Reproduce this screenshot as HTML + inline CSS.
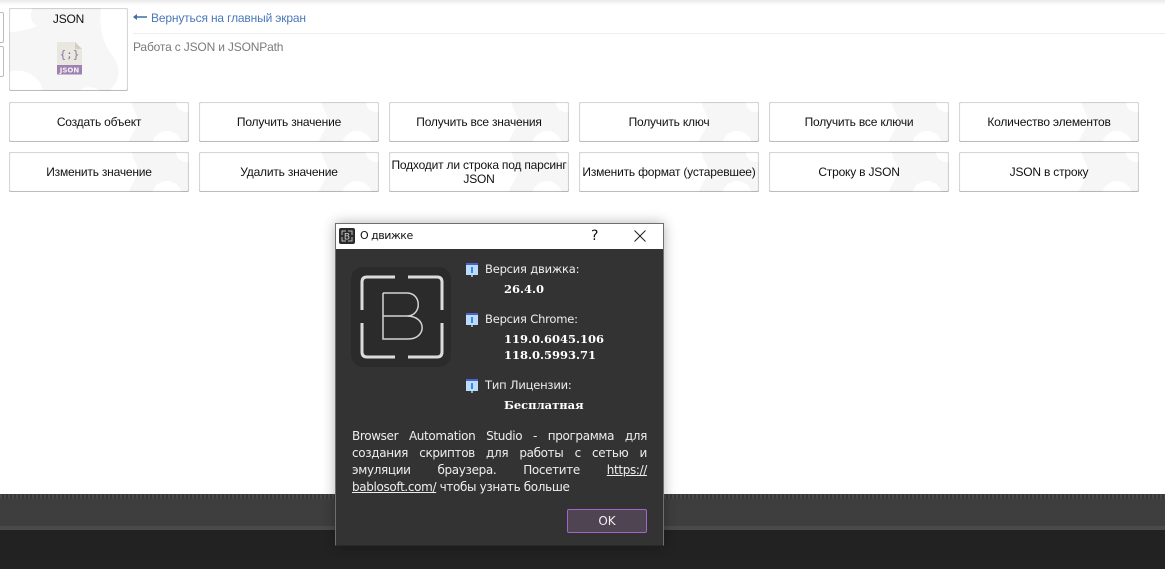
<!DOCTYPE html>
<html><head><meta charset="utf-8"><style>
html,body{margin:0;padding:0;width:1165px;height:569px;overflow:hidden;background:#fff;font-family:"Liberation Sans",sans-serif}
#top{position:absolute;left:0;top:0;width:1165px;height:5px;background:linear-gradient(#e9e9e9,#fff)}
.ab{position:absolute}
.b{position:absolute;width:180px;height:40px;box-sizing:border-box;border-radius:2px;background:#fff;display:flex;align-items:center;justify-content:center;text-align:center;font-size:12px;letter-spacing:-.2px;line-height:14px;color:#111;overflow:hidden;white-space:nowrap}
.b svg{position:absolute;left:0;top:0}
.b span{position:relative}
.b:after,.c:after{content:"";position:absolute;left:0;top:0;right:0;bottom:0;border-radius:2px;box-shadow:inset 0 0 1.500px rgba(0,0,0,.65),inset 0 -1px 0 rgba(0,0,0,.12);pointer-events:none}
#foot{position:absolute;left:0;top:494px;width:1165px;height:75px;background:#222}
#dot{position:absolute;left:0;top:0;width:1165px;height:5px;background:repeating-linear-gradient(90deg,#474747 0 2px,#373737 2px 4px)}
#mid{position:absolute;left:0;top:5px;width:1165px;height:27px;background:#3e3e3e}
#ln{position:absolute;left:0;top:32px;width:1165px;height:4px;background:#4a4a4a}
#dlg{position:absolute;left:335px;top:223px;width:329px;height:323px;box-sizing:border-box;border:1px solid #6e6e6e;border-bottom-color:#2a2a2a;background:#333;box-shadow:0 0 12px rgba(0,0,0,.3);font-family:"DejaVu Sans",sans-serif;color:#f0f0f0}
#tb{position:absolute;left:0;top:0;width:327px;height:25px;background:#fff;color:#111;font-size:11px}
.l{position:absolute;left:149px;font-size:11.500px;letter-spacing:-.2px;line-height:14px;white-space:nowrap;color:#eee}
.v{position:absolute;left:168px;font-family:"DejaVu Serif",serif;font-weight:bold;font-size:11.500px;line-height:16px;color:#fff;white-space:nowrap}
.p{position:absolute;left:16px;width:295px;font-size:12px;letter-spacing:-.35px;line-height:17px;color:#eee;text-align:justify;text-align-last:justify;white-space:nowrap}
.i{position:absolute;left:130px;width:12px;height:12px;background:linear-gradient(#4a63c8 0 2px,#bcdcff 2px)}
.i:after{content:"";position:absolute;left:5px;top:4px;width:2px;height:6px;background:#3a8ae0}
.i:before{content:"";position:absolute;left:5px;top:12px;width:2px;height:2px;background:#9ab}
</style></head><body>
<svg width="0" height="0" style="position:absolute"><defs>
<g id="bg"><path d="M123 0C123 9 131 12 128 22C126 30 121 34 120 40H180V0Z" fill="#f6f6f6"/><circle cx="158" cy="44" r="15" fill="#fff"/><circle cx="177" cy="0" r="10" fill="#fff"/></g>
</defs></svg>
<div id="top"></div>

<div class="ab" style="left:-6px;top:12px;width:8px;height:29px;border:1px solid #bbb;border-radius:2px"></div>
<div class="ab" style="left:-6px;top:46px;width:8px;height:29px;border:1px solid #bbb;border-radius:2px"></div>

<div class="ab c" style="left:9px;top:8px;width:119px;height:83px;background:#fff;border-radius:2px;overflow:hidden">
<svg width="119" height="83" style="position:absolute;left:0;top:0"><path d="M24 0C20 8 22 14 28 18C20 22 8 24 0 24V64C14 60 30 66 34 83H70C75 78 85 78 92 83H100C112 72 112 60 104 48C92 34 90 14 92 0Z" fill="#f6f6f6"/></svg>
<div style="position:absolute;left:0;top:4px;width:119px;text-align:center;font-size:12px;letter-spacing:-.2px;line-height:14px;color:#111">JSON</div>
<svg width="26" height="33" viewBox="0 0 26 33" style="position:absolute;left:48px;top:34px">
<path d="M0 0H18L25 7V24H0Z" fill="#e9e8e0"/><path d="M18 0L25 7H18Z" fill="#d2d0c6"/><rect x="0" y="23" width="25" height="9.500" fill="#a080b0"/>
<text x="12.500" y="30.500" text-anchor="middle" font-family="'DejaVu Sans',sans-serif" font-weight="bold" font-size="7" fill="#f4f0f6">JSON</text>
<text x="12.500" y="16" text-anchor="middle" font-family="'DejaVu Sans Mono',monospace" font-size="11" fill="#8a72a0">{;}</text></svg>
</div>

<div class="ab" style="left:133px;top:11px;font-size:12px;letter-spacing:-.16px;line-height:14px;color:#4a78b8;white-space:nowrap"><svg width="14" height="8" style="vertical-align:1px;margin-right:4px"><path d="M0 4L4 1V3.300H14V4.700H4V7Z" fill="#3d6ea8"/></svg>Вернуться на главный экран</div>
<div class="ab" style="left:133px;top:33px;width:1032px;height:1px;background:#eee"></div>
<div class="ab" style="left:133px;top:40px;font-size:12px;letter-spacing:-.17px;line-height:14px;color:#7a7a7a;white-space:nowrap">Работа с JSON и JSONPath</div>

<div class="b" style="left:9px;top:102px"><svg width="180" height="40"><use href="#bg"/></svg><span>Создать объект</span></div>
<div class="b" style="left:199px;top:102px"><svg width="180" height="40"><use href="#bg"/></svg><span>Получить значение</span></div>
<div class="b" style="left:389px;top:102px"><svg width="180" height="40"><use href="#bg"/></svg><span>Получить все значения</span></div>
<div class="b" style="left:579px;top:102px"><svg width="180" height="40"><use href="#bg"/></svg><span>Получить ключ</span></div>
<div class="b" style="left:769px;top:102px"><svg width="180" height="40"><use href="#bg"/></svg><span>Получить все ключи</span></div>
<div class="b" style="left:959px;top:102px"><svg width="180" height="40"><use href="#bg"/></svg><span>Количество элементов</span></div>
<div class="b" style="left:9px;top:152px"><svg width="180" height="40"><use href="#bg"/></svg><span>Изменить значение</span></div>
<div class="b" style="left:199px;top:152px"><svg width="180" height="40"><use href="#bg"/></svg><span>Удалить значение</span></div>
<div class="b" style="left:389px;top:152px"><svg width="180" height="40"><use href="#bg"/></svg><span>Подходит ли строка под парсинг<br>JSON</span></div>
<div class="b" style="left:579px;top:152px"><svg width="180" height="40"><use href="#bg"/></svg><span>Изменить формат (устаревшее)</span></div>
<div class="b" style="left:769px;top:152px"><svg width="180" height="40"><use href="#bg"/></svg><span>Строку в JSON</span></div>
<div class="b" style="left:959px;top:152px"><svg width="180" height="40"><use href="#bg"/></svg><span>JSON в строку</span></div>

<div id="foot"><div id="dot"></div><div id="mid"></div><div id="ln"></div></div>

<div id="dlg">
<div id="tb">
<svg width="16" height="16" viewBox="0 0 16 16" style="position:absolute;left:3px;top:4px"><rect width="16" height="16" rx="2" fill="#2a2a2a"/><path d="M3 7V3H7M9 3H13V7M13 9V13H9M7 13H3V9" fill="none" stroke="#bbb" stroke-width="1"/><text x="8" y="11.500" text-anchor="middle" font-family="'DejaVu Sans',sans-serif" font-size="9" fill="#ccc">B</text></svg>
<span style="position:absolute;left:24px;top:5px;line-height:14px;letter-spacing:-.5px">О движке</span>
<span style="position:absolute;left:255px;top:5px;font-size:14px;line-height:15px">?</span>
<svg width="12" height="12" style="position:absolute;left:298px;top:6px"><path d="M.5 .5L11.500 11.500M11.500 .5L.5 11.500" stroke="#222" stroke-width="1" fill="none"/></svg>
</div>

<svg width="100" height="100" viewBox="0 0 100 100" style="position:absolute;left:15px;top:43px">
<rect width="100" height="100" rx="12" fill="#2b2b2b"/>
<path d="M44 10H16Q11 10 11 15V43M57 10H86Q91 10 91 15V43M11 56V85Q11 90 16 90H44M91 56V85Q91 90 86 90H57" fill="none" stroke="#dcdcdc" stroke-width="3"/>
<path d="M32 26H56C71 26 71 49 56 49H32M32 26V72H57C76 72 76 49 56 49" fill="none" stroke="#d4d4d4" stroke-width="1.500"/>
</svg>

<div class="i" style="top:39px"></div><div class="l" style="top:38px">Версия движка:</div>
<div class="v" style="top:57px">26.4.0</div>
<div class="i" style="top:89px"></div><div class="l" style="top:88px">Версия Chrome:</div>
<div class="v" style="top:107px">119.0.6045.106</div>
<div class="v" style="top:123px">118.0.5993.71</div>
<div class="i" style="top:155px"></div><div class="l" style="top:154px">Тип Лицензии:</div>
<div class="v" style="top:173px">Бесплатная</div>

<div class="p" style="top:204px">Browser Automation Studio - программа для</div>
<div class="p" style="top:221px">создания скриптов для работы с сетью и</div>
<div class="p" style="top:238px">эмуляции браузера. Посетите <u>https://</u></div>
<div class="p" style="top:255px;text-align-last:left"><u>bablosoft.com/</u> чтобы узнать больше</div>

<div style="position:absolute;left:231px;top:285px;width:80px;height:24px;box-sizing:border-box;border:1px solid #a066c8;border-radius:2px;background:#4f4552;color:#eee;font-size:12px;line-height:23px;text-align:center">OK</div>
</div>
</body></html>
